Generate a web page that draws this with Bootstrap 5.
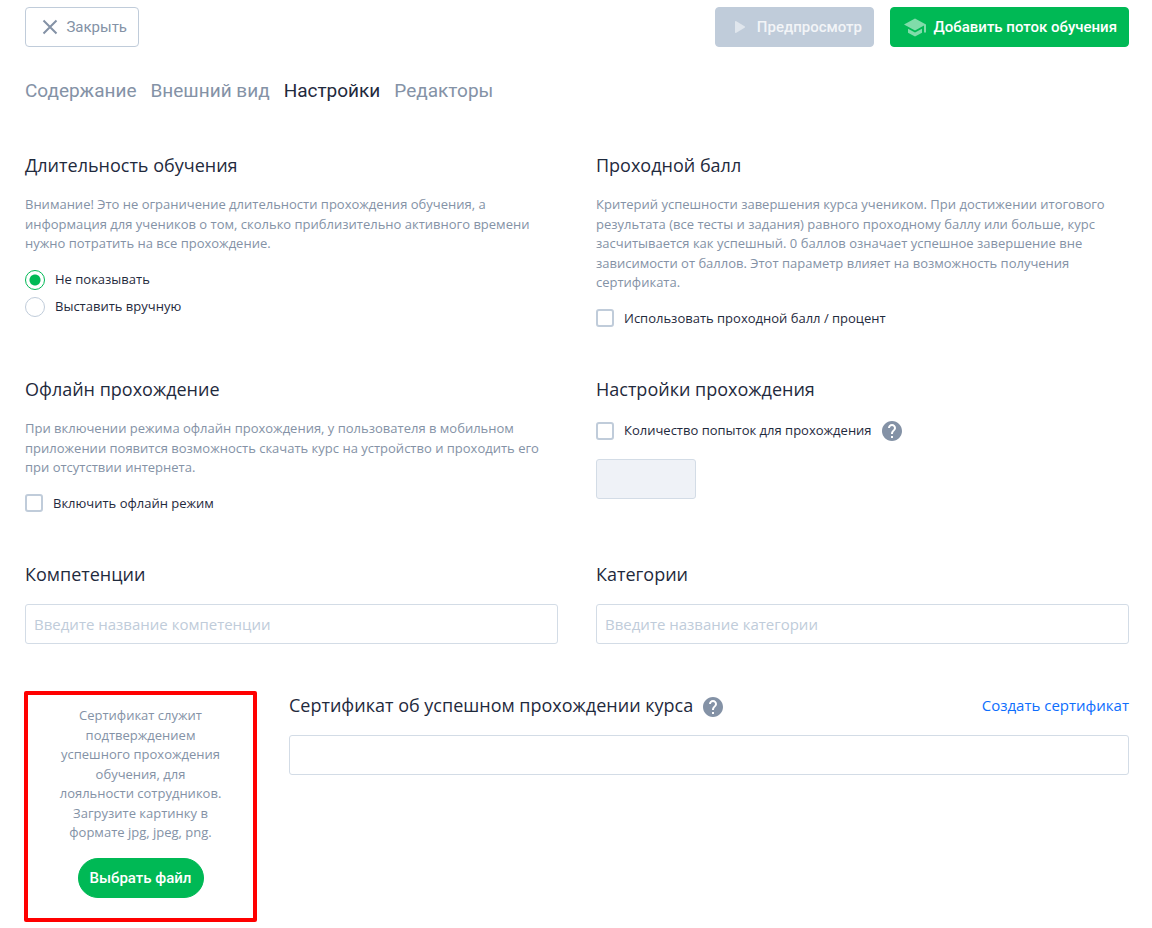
<!DOCTYPE html>
<html lang="ru">
<head>
<meta charset="utf-8">
<meta name="viewport" content="width=device-width, initial-scale=1">
<title>Настройки курса</title>
<link href="https://cdn.jsdelivr.net/npm/bootstrap@5.3.0/dist/css/bootstrap.min.css" rel="stylesheet">
<style>
  :root { --ink: #1f2a3d; --muted: #8492a6; --line: #d3dce6; --soft: #c0ccda; --green: #00b955; }
  body { font-family: "Open Sans", "Noto Sans", sans-serif; font-size: 13px; line-height: 1.5; color: var(--ink); background: #fff; }
  .page { padding: 7px 23px 6px 25px; }
  .btn { --bs-btn-font-family: Roboto, sans-serif; --bs-btn-font-size: 15px; --bs-btn-border-radius: 4px; height: 40px; line-height: 24px; }
  .btn-close-page { --bs-btn-color: var(--muted); --bs-btn-border-color: var(--soft); --bs-btn-hover-color: var(--ink); --bs-btn-hover-border-color: var(--muted); width: 114px; padding: 0 11px 0 16px; }
  .btn-preview { --bs-btn-disabled-color: #fff; --bs-btn-disabled-bg: var(--soft); --bs-btn-disabled-border-color: var(--soft); --bs-btn-disabled-opacity: 1; width: 159px; padding: 0 11px 0 19px; font-weight: 500; }
  .btn-preview span { opacity: .8; }
  .btn-green { --bs-btn-color: #fff; --bs-btn-bg: var(--green); --bs-btn-border-color: var(--green); --bs-btn-hover-color: #fff; --bs-btn-hover-bg: #00a34b; --bs-btn-hover-border-color: #00a34b; font-weight: 500; }
  .btn-stream { width: 239px; padding: 0 11px 0 13px; }
  .btn-file { width: 126px; }
  .tabs { margin-top: 30px; gap: 14px; font-family: Roboto, sans-serif; font-size: 19px; line-height: 28px; }
  .tabs .nav-link { padding: 0; color: var(--muted); }
  .tabs .nav-link.active { color: var(--ink); }
  .settings { --bs-gutter-x: 38px; --bs-gutter-y: 48px; margin-top: -1px; }
  h2 { font-size: 18px; line-height: 27px; font-weight: 400; margin: 0 0 16px; }
  .hint { color: var(--muted); margin: 0 0 16px; }
  .form-check { display: flex; align-items: center; gap: 10px; min-height: 0; padding: 0; margin: 0; }
  .form-check + .form-check { margin-top: 7px; }
  .form-check .form-check-input { float: none; flex: none; margin: 0; width: 18px; height: 18px; border: 2px solid var(--soft); border-radius: 3px; }
  .form-check .form-check-input[type=radio] { width: 20px; height: 20px; border: 1px solid var(--soft); border-radius: 50%; }
  .form-check .form-check-input[type=radio]:checked { background: radial-gradient(circle, var(--green) 5px, #fff 6px); border-color: var(--green); }
  .form-check-input:checked { background-color: var(--green); border-color: var(--green); }
  .form-control { height: 40px; padding: 8px; font-size: 15px; border-color: var(--line); border-radius: 3px; }
  .form-control::placeholder { color: var(--soft); }
  .attempts-group { padding-top: 2px; }
  .attempts { width: 100px; margin-top: 18px; }
  .attempts:disabled { background: #eff2f7; }
  .certificate { margin: 47px 0 0 -1px; gap: 32px; }
  .upload { width: 233px; border: 4px solid #f00; border-radius: 2px; padding: 11px 30px 20px; text-align: center; }
  .upload .hint { margin-bottom: 15px; }
  .certificate-form { padding-top: 1px; }
  .help { color: var(--muted); }
  .certificate-form .help { margin: 5px 0 0 10px; }
  .link-create { font-size: 15px; line-height: 27px; color: #0d6efd; text-decoration: none; }
</style>
</head>
<body>
<svg class="d-none">
  <symbol id="help" viewBox="2 2 20 20"><path fill="currentColor" d="M12 2C6.480 2 2 6.480 2 12s4.480 10 10 10 10-4.480 10-10S17.520 2 12 2zm1 17h-2v-2h2v2zm2.070-7.750-.9.920C13.450 12.900 13 13.500 13 15h-2v-.5c0-1.100.45-2.100 1.170-2.830l1.240-1.260c.37-.36.590-.86.590-1.410 0-1.100-.9-2-2-2s-2 .9-2 2H8c0-2.210 1.790-4 4-4s4 1.790 4 4c0 .88-.36 1.680-.93 2.250z"/></symbol>
</svg>
<div class="page">
  <header class="d-flex align-items-center gap-3">
    <button type="button" class="btn btn-close-page d-flex align-items-center justify-content-between me-auto">
      <svg width="16" height="16" viewBox="0 0 16 16" stroke="currentColor" stroke-width="2" aria-hidden="true"><path d="M1.500 1.500l13 13M14.500 1.500l-13 13"/></svg>
      <span>Закрыть</span>
    </button>
    <button type="button" class="btn btn-preview d-flex align-items-center justify-content-between" disabled>
      <svg width="12" height="14" viewBox="0 0 12 14" fill="#fff" fill-opacity=".5" aria-hidden="true"><path d="M0 2q0-1.500 1.300-.8L9.600 6.200q1.100.8 0 1.600L1.300 12.800Q0 13.500 0 12z"/></svg>
      <span>Предпросмотр</span>
    </button>
    <button type="button" class="btn btn-green btn-stream d-flex align-items-center justify-content-between">
      <svg width="22" height="19" viewBox="1 2.500 22 19" fill="#fff" fill-opacity=".5" aria-hidden="true"><path d="M5 13.180v4L12 21l7-3.820v-4L12 17l-7-3.820zM12 3L1 9l11 6 9-4.910V17h2V9L12 3z"/></svg>
      <span>Добавить поток обучения</span>
    </button>
  </header>

  <nav class="nav tabs">
    <a class="nav-link" href="#">Содержание</a>
    <a class="nav-link" href="#">Внешний вид</a>
    <a class="nav-link active" aria-current="page" href="#">Настройки</a>
    <a class="nav-link" href="#">Редакторы</a>
  </nav>

  <main>
    <div class="row settings">
      <section class="col-6">
        <h2>Длительность обучения</h2>
        <p class="hint">Внимание! Это не ограничение длительности прохождения обучения, а информация для учеников о том, сколько приблизительно активного времени нужно потратить на все прохождение.</p>
        <div class="form-check">
          <input class="form-check-input" type="radio" name="duration" id="hide" checked>
          <label for="hide">Не показывать</label>
        </div>
        <div class="form-check">
          <input class="form-check-input" type="radio" name="duration" id="manual">
          <label for="manual">Выставить вручную</label>
        </div>
      </section>
      <section class="col-6">
        <h2>Проходной балл</h2>
        <p class="hint">Критерий успешности завершения курса учеником. При достижении итогового результата (все тесты и задания) равного проходному баллу или больше, курс засчитывается как успешный. 0 баллов означает успешное завершение вне зависимости от баллов. Этот параметр влияет на возможность получения сертификата.</p>
        <div class="form-check">
          <input class="form-check-input" type="checkbox" id="score">
          <label for="score">Использовать проходной балл / процент</label>
        </div>
      </section>
      <section class="col-6">
        <h2>Офлайн прохождение</h2>
        <p class="hint">При включении режима офлайн прохождения, у пользователя в мобильном приложении появится возможность скачать курс на устройство и проходить его при отсутствии интернета.</p>
        <div class="form-check">
          <input class="form-check-input" type="checkbox" id="offline">
          <label for="offline">Включить офлайн режим</label>
        </div>
      </section>
      <section class="col-6">
        <h2>Настройки прохождения</h2>
        <div class="attempts-group">
          <div class="form-check">
            <input class="form-check-input" type="checkbox" id="limit">
            <label for="limit">Количество попыток для прохождения</label>
            <svg class="help" width="20" height="20" aria-hidden="true"><use href="#help"/></svg>
          </div>
          <input class="form-control attempts" type="text" aria-label="Количество попыток" disabled>
        </div>
      </section>
      <section class="col-6">
        <h2><label for="skills">Компетенции</label></h2>
        <input class="form-control" id="skills" type="text" placeholder="Введите название компетенции">
      </section>
      <section class="col-6">
        <h2><label for="categories">Категории</label></h2>
        <input class="form-control" id="categories" type="text" placeholder="Введите название категории">
      </section>
    </div>

    <section class="certificate d-flex align-items-start">
      <div class="upload flex-shrink-0">
        <p class="hint">Сертификат служит подтверждением успешного прохождения обучения, для лояльности сотрудников. Загрузите картинку в формате jpg, jpeg, png.</p>
        <button type="button" class="btn btn-green btn-file rounded-pill p-0">Выбрать файл</button>
      </div>
      <div class="certificate-form flex-grow-1">
        <div class="d-flex align-items-start">
          <h2><label for="certificate">Сертификат об успешном прохождении курса</label></h2>
          <svg class="help" width="20" height="20" aria-hidden="true"><use href="#help"/></svg>
          <a class="link-create ms-auto" href="#">Создать сертификат</a>
        </div>
        <input class="form-control" id="certificate" type="text">
      </div>
    </section>
  </main>
</div>
<script src="https://cdn.jsdelivr.net/npm/bootstrap@5.3.0/dist/js/bootstrap.bundle.min.js"></script>
</body>
</html>
